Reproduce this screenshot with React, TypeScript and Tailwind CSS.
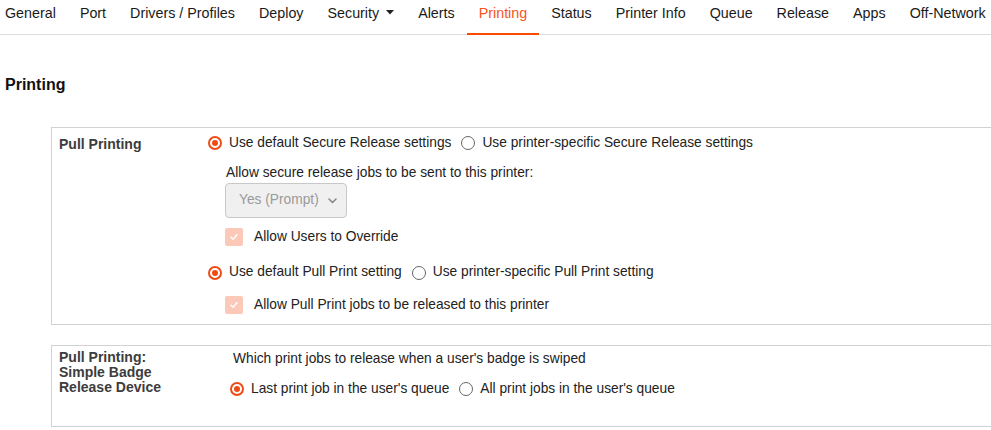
import React from 'react';

// ==========================================
// DATA
// ==========================================

const TABS = [
  'General',
  'Port',
  'Drivers / Profiles',
  'Deploy',
  'Security',
  'Alerts',
  'Printing',
  'Status',
  'Printer Info',
  'Queue',
  'Release',
  'Apps',
  'Off-Network',
];

const FONT = { fontFamily: '"Liberation Sans", Arial, sans-serif' };

// ==========================================
// SMALL CONTROLS
// ==========================================

const Radio: React.FC<{ checked?: boolean; label: string }> = ({ checked, label }) => (
  <label className="flex items-center gap-[7px] whitespace-nowrap">
    {checked ? (
      <span className="w-[14px] h-[14px] rounded-full border-2 border-[#f04a14] flex items-center justify-center">
        <span className="w-[6px] h-[6px] rounded-full bg-[#f04a14]"></span>
      </span>
    ) : (
      <span className="w-[14px] h-[14px] rounded-full border-[1.5px] border-[#666]"></span>
    )}
    <span>{label}</span>
  </label>
);

const Checkbox: React.FC<{ label: string }> = ({ label }) => (
  <label className="flex items-center gap-[11px]">
    <span className="w-[18px] h-[18px] rounded-[2px] bg-[#fcc9b8] flex items-center justify-center">
      <svg width="10" height="10" viewBox="0 0 10 10" fill="none">
        <path d="M2 5.2 L4.1 7.2 L8 2.8" stroke="#fff" strokeWidth="1.4" strokeLinecap="round" strokeLinejoin="round" />
      </svg>
    </span>
    <span>{label}</span>
  </label>
);

// ==========================================
// MAIN COMPONENT
// ==========================================

const App: React.FC = () => {
  return (
    <div className="w-[991px] h-[430px] overflow-hidden bg-white text-[13.75px] text-[#222]" style={FONT}>
      {/* Tabs */}
      <nav className="flex h-[35px] border-b border-[#dddddd] ml-[-7px] text-[14.3px]">
        {TABS.map((tab) => (
          <div
            key={tab}
            className={
              tab === 'Printing'
                ? 'px-3 pt-[3px] flex items-start whitespace-nowrap text-[#f5541c] border-b-2 border-[#fc4a00] -mb-px'
                : 'px-3 pt-[3px] flex items-start whitespace-nowrap text-[#1a1a1a]'
            }
          >
            {tab}
            {tab === 'Security' && (
              <svg className="ml-[7px] mt-[7px]" width="8" height="5" viewBox="0 0 8 5">
                <path d="M0 0 L8 0 L4 4.5 Z" fill="#222" />
              </svg>
            )}
          </div>
        ))}
      </nav>

      {/* Title */}
      <h1 className="ml-[5px] mt-[40px] text-[16px] font-bold text-[#111] leading-5">Printing</h1>

      {/* Pull Printing */}
      <section className="ml-[51px] mt-[32px] border border-r-0 border-[#d2d2d2] flex pt-[5px] pb-[9px]">
        <div className="w-[156px] pl-[7px] text-[14px] font-bold text-[#3c3c3c] pt-[1px]">Pull Printing</div>
        <div className="flex flex-col">
          <div className="flex items-center gap-[10px] h-[20px]">
            <Radio checked label="Use default Secure Release settings" />
            <Radio label="Use printer-specific Secure Release settings" />
          </div>
          <div className="ml-[18px] mt-[12px] leading-4">Allow secure release jobs to be sent to this printer:</div>
          <div className="ml-[17px] mt-[2px] w-[122px] h-[35px] rounded-[4px] border border-[#c8c8c8] bg-[#f0f0f0] flex items-center justify-between pl-[13px] pr-[9px] text-[#9a9a9a]">
            <span>Yes (Prompt)</span>
            <svg width="9" height="6" viewBox="0 0 9 6" fill="none">
              <path d="M1 1 L4.5 4.5 L8 1" stroke="#888" strokeWidth="1.6" strokeLinecap="round" strokeLinejoin="round" />
            </svg>
          </div>
          <div className="ml-[17px] mt-[9px]">
            <Checkbox label="Allow Users to Override" />
          </div>
          <div className="flex items-center gap-[10px] h-[20px] mt-[15px]">
            <Radio checked label="Use default Pull Print setting" />
            <Radio label="Use printer-specific Pull Print setting" />
          </div>
          <div className="ml-[17px] mt-[12px]">
            <Checkbox label="Allow Pull Print jobs to be released to this printer" />
          </div>
        </div>
      </section>

      {/* Simple Badge Release Device */}
      <section className="ml-[51px] mt-[20px] h-[82px] border border-r-0 border-[#d2d2d2] flex pt-[3px]">
        <div className="w-[178px] pl-[7px] text-[14px] font-bold text-[#3c3c3c] leading-[15px] pt-[1px]">
          Pull Printing:
          <br />
          Simple Badge
          <br />
          Release Device
        </div>
        <div className="flex flex-col">
          <div className="ml-[3px] leading-5">Which print jobs to release when a user's badge is swiped</div>
          <div className="flex items-center gap-[10px] h-[20px] mt-[10px]">
            <Radio checked label="Last print job in the user's queue" />
            <Radio label="All print jobs in the user's queue" />
          </div>
        </div>
      </section>
    </div>
  );
};

export default App;
